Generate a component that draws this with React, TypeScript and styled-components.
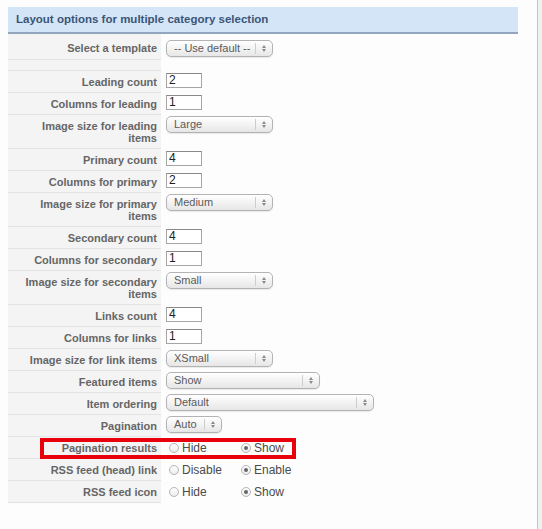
import styled, { createGlobalStyle } from "styled-components";

const GlobalStyle = createGlobalStyle`
    html, body {
        margin: 0;
        padding: 0;
        background: #fff;
    }
    body {
        font-family: "Liberation Sans", Arial, sans-serif;
    }
`;

const Page = styled.div`
    display: flex;
    width: 542px;
    height: 529px;
    overflow: hidden;
`;

const Main = styled.div`
    position: relative;
    flex: 0 0 529px;
    padding: 7px 0 0 8px;
    border-right: 1px solid #c6c6c6;
    background: #fdfdfd;
`;

const Side = styled.div`
    flex: 1;
    background: #f1f1f1;
`;

const Header = styled.h3`
    width: 502px;
    margin: 0;
    height: 25px;
    padding: 0 0 0 8px;
    line-height: 25px;
    font-size: 11.5px;
    font-weight: bold;
    color: #3b5576;
    background: #d4e5f8;
    border-bottom: 2px solid #93a6bd;
`;

const Table = styled.table`
    width: 510px;
    border-collapse: collapse;
    border-spacing: 0;
`;

const Label = styled.td<{ $first?: boolean; $blank?: boolean }>`
    width: 145px;
    padding: ${(p) => (p.$blank ? "0 4px" : p.$first ? "8px 4px 5px" : "5px 4px 4px")};
    height: ${(p) => (p.$blank ? "10px" : "auto")};
    vertical-align: top;
    text-align: right;
    font-size: 11px;
    line-height: 12px;
    font-weight: bold;
    color: #666;
    background: #f4f4f4;
    border-bottom: 1px solid #e3e3e3;
`;

const Control = styled.td<{ $first?: boolean }>`
    padding: ${(p) => (p.$first ? "6px 4px 0 5px" : "1px 4px 0 5px")};
    vertical-align: top;
`;

const TextBox = styled.input`
    display: block;
    box-sizing: border-box;
    width: 36px;
    height: 15px;
    margin: 1px 0 0;
    padding: 0 2px;
    font-family: "Liberation Sans", Arial, sans-serif;
    font-size: 12px;
    color: #222;
    border: 1px solid #a5a5a5;
    border-top-color: #888;
    background: #fff;
    outline: none;
`;

const SelectBox = styled.div<{ $w: number }>`
    display: flex;
    box-sizing: border-box;
    width: ${(p) => p.$w}px;
    height: 17px;
    border: 1px solid #b3b3b3;
    border-radius: 5px;
    background: linear-gradient(#ffffff, #f3f3f3 50%, #e6e6e6);
    box-shadow: 0 1px 1px rgba(0, 0, 0, 0.08);
    font-size: 11px;
    line-height: 15px;
    color: #5a5a5a;
`;

const SelectText = styled.span`
    flex: 1;
    padding-left: 7px;
    white-space: nowrap;
    overflow: hidden;
`;

const SelectArrows = styled.span`
    flex: 0 0 16px;
    display: flex;
    flex-direction: column;
    align-items: center;
    justify-content: center;
    border-left: 1px solid #cdcdcd;
    margin: 2px 0;
    gap: 1px;
`;

const Arrow = styled.span<{ $down?: boolean }>`
    width: 0;
    height: 0;
    border-left: 2px solid transparent;
    border-right: 2px solid transparent;
    ${(p) => (p.$down ? "border-top: 3px solid #8a8a8a;" : "border-bottom: 3px solid #8a8a8a;")}
`;

const RadioGroup = styled.div`
    display: flex;
    padding: 4px 0 0 3px;
    font-size: 12px;
    line-height: 13px;
    color: #4a4a4a;
`;

const RadioOption = styled.label`
    display: flex;
    align-items: center;
    width: 72px;
    gap: 3px;
`;

const RadioDot = styled.span<{ $on?: boolean }>`
    position: relative;
    box-sizing: border-box;
    width: 10px;
    height: 10px;
    border-radius: 50%;
    border: 1px solid #b5b5b5;
    background: linear-gradient(#ffffff, #ececec);
    &::after {
        content: "";
        display: ${(p) => (p.$on ? "block" : "none")};
        position: absolute;
        left: 2px;
        top: 2px;
        width: 4px;
        height: 4px;
        border-radius: 50%;
        background: #666;
    }
`;

const Highlight = styled.div`
    position: absolute;
    left: 40px;
    top: 438px;
    width: 256px;
    height: 21px;
    box-sizing: border-box;
    border: 4px solid #e8000c;
    pointer-events: none;
`;

function Select({ value, width }: { value: string; width: number }) {
    return (
        <SelectBox $w={width}>
            <SelectText>{value}</SelectText>
            <SelectArrows>
                <Arrow />
                <Arrow $down />
            </SelectArrows>
        </SelectBox>
    );
}

function Radios({ options, selected }: { options: string[]; selected: number }) {
    return (
        <RadioGroup>
            {options.map((o, i) => (
                <RadioOption key={o}>
                    <RadioDot $on={i === selected} />
                    {o}
                </RadioOption>
            ))}
        </RadioGroup>
    );
}

type Field =
    | { label: string[]; kind: "text"; value: string }
    | { label: string[]; kind: "select"; value: string; width: number }
    | { label: string[]; kind: "radio"; options: string[]; selected: number };

const fields: Field[] = [
    { label: ["Leading count"], kind: "text", value: "2" },
    { label: ["Columns for leading"], kind: "text", value: "1" },
    { label: ["Image size for leading", "items"], kind: "select", value: "Large", width: 107 },
    { label: ["Primary count"], kind: "text", value: "4" },
    { label: ["Columns for primary"], kind: "text", value: "2" },
    { label: ["Image size for primary", "items"], kind: "select", value: "Medium", width: 107 },
    { label: ["Secondary count"], kind: "text", value: "4" },
    { label: ["Columns for secondary"], kind: "text", value: "1" },
    { label: ["Image size for secondary", "items"], kind: "select", value: "Small", width: 107 },
    { label: ["Links count"], kind: "text", value: "4" },
    { label: ["Columns for links"], kind: "text", value: "1" },
    { label: ["Image size for link items"], kind: "select", value: "XSmall", width: 107 },
    { label: ["Featured items"], kind: "select", value: "Show", width: 154 },
    { label: ["Item ordering"], kind: "select", value: "Default", width: 208 },
    { label: ["Pagination"], kind: "select", value: "Auto", width: 56 },
    { label: ["Pagination results"], kind: "radio", options: ["Hide", "Show"], selected: 1 },
    { label: ["RSS feed (head) link"], kind: "radio", options: ["Disable", "Enable"], selected: 1 },
    { label: ["RSS feed icon"], kind: "radio", options: ["Hide", "Show"], selected: 1 },
];

export default function App() {
    return (
        <>
            <GlobalStyle />
            <Page>
                <Main>
                    <Header>Layout options for multiple category selection</Header>
                    <Table>
                        <tbody>
                            <tr>
                                <Label $first>Select a template</Label>
                                <Control $first>
                                    <Select value="-- Use default --" width={107} />
                                </Control>
                            </tr>
                            <tr>
                                <Label $blank />
                                <Control />
                            </tr>
                            {fields.map((f) => (
                                <tr key={f.label.join(" ")}>
                                    <Label>
                                        {f.label.map((l, i) => (
                                            <div key={i}>{l}</div>
                                        ))}
                                    </Label>
                                    <Control>
                                        {f.kind === "text" && <TextBox defaultValue={f.value} />}
                                        {f.kind === "select" && <Select value={f.value} width={f.width} />}
                                        {f.kind === "radio" && <Radios options={f.options} selected={f.selected} />}
                                    </Control>
                                </tr>
                            ))}
                        </tbody>
                    </Table>
                    <Highlight />
                </Main>
                <Side />
            </Page>
        </>
    );
}
